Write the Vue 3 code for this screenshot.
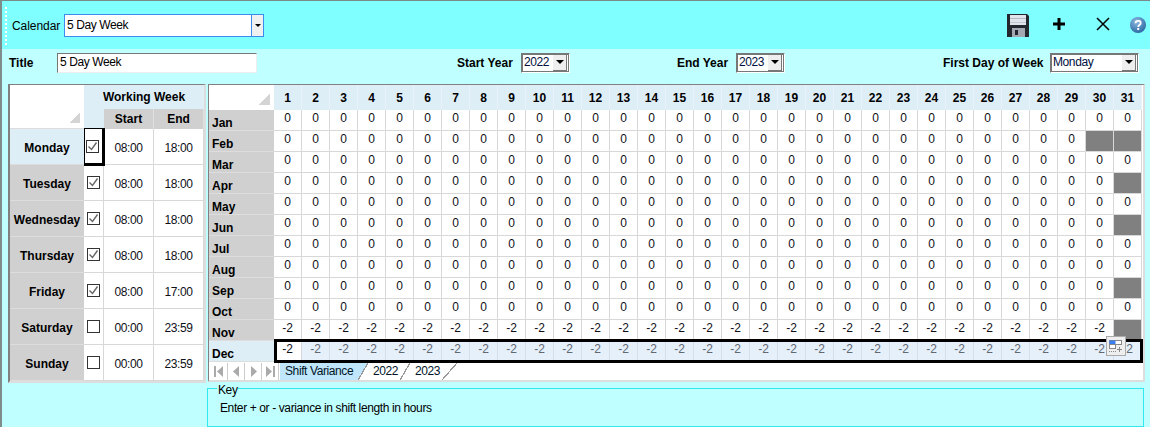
<template>
  <div class="window">
    <div class="toolbar">
      <div class="grip"></div>
      <span class="cal-label">Calendar</span>
      <div class="combo">
        <span class="combo-text">5 Day Week</span>
        <span class="combo-btn"><i class="arrow small"></i></span>
      </div>
      <div class="tools">
        <svg class="ico-save" width="22" height="23" viewBox="0 0 22 23">
          <path d="M0 0h20l2 2v21H0z" fill="#24282e" />
          <rect x="3" y="1" width="16" height="10" fill="#e2e4ec" />
          <rect x="3" y="4" width="16" height="1" fill="#b4b8c6" />
          <rect x="3" y="8" width="16" height="1" fill="#c4c8d2" />
          <rect x="5" y="14" width="13" height="9" fill="#a4a8b2" />
          <rect x="8" y="16" width="3" height="5" fill="#24282e" />
        </svg>
        <svg class="ico-plus" width="12" height="12" viewBox="0 0 12 12">
          <path d="M4.500 0h3v4.500h4.500v3h-4.500v4.500h-3v-4.500h-4.500v-3h4.500z" fill="#000" />
        </svg>
        <svg class="ico-close" width="14" height="14" viewBox="0 0 14 14">
          <path d="M1 1l12 12M13 1L1 13" stroke="#000" stroke-width="1.500" fill="none" />
        </svg>
        <svg class="ico-help" width="16" height="16" viewBox="0 0 16 16">
          <defs>
            <radialGradient id="helpfill" cx="0.4" cy="0.3" r="0.8">
              <stop offset="0" stop-color="#8db8e0" />
              <stop offset="1" stop-color="#20609c" />
            </radialGradient>
          </defs>
          <circle cx="8" cy="8" r="8" fill="url(#helpfill)" />
          <path d="M5.500 6.200c0-3.200 5.200-3.200 5.200-.2 0 2-2.500 2-2.500 4" stroke="#fff" stroke-width="1.800" fill="none" />
          <rect x="7.200" y="11" width="2" height="2" fill="#fff" />
        </svg>
      </div>
    </div>

    <div class="titlebar">
      <label class="t-label title-label">Title</label>
      <div class="title-input">5 Day Week</div>
      <label class="t-label start-label">Start Year</label>
      <div class="sel year-sel"><span>2022</span><span class="sel-btn"><i class="arrow"></i></span></div>
      <label class="t-label end-label">End Year</label>
      <div class="sel year-sel"><span>2023</span><span class="sel-btn"><i class="arrow"></i></span></div>
      <label class="t-label first-label">First Day of Week</label>
      <div class="sel day-sel"><span>Monday</span><span class="sel-btn"><i class="arrow"></i></span></div>
    </div>

    <div class="main">
      <div class="week-frame">
        <div class="week-grid">
          <div class="corner week-corner"><i class="tri"></i></div>
          <div class="ww-head">Working Week</div>
          <div class="blue-cell"></div>
          <div class="gray-head">Start</div>
          <div class="gray-head">End</div>
          <template v-for="(d, i) in days" :key="d.name">
            <div class="day-name" :class="{ active: i === 0 }">{{ d.name }}</div>
            <div class="check-cell" :class="{ focus: i === 0 }">
              <span class="check">
                <svg v-if="d.on" width="11" height="11" viewBox="0 0 11 11">
                  <path d="M1.500 5.500l3 3 5-7" stroke="#666" stroke-width="1.400" fill="none" />
                </svg>
              </span>
            </div>
            <div class="time">{{ d.start }}</div>
            <div class="time">{{ d.end }}</div>
          </template>
        </div>
      </div>

      <div class="sheet-frame">
        <div class="sheet-grid">
          <div class="corner sheet-corner"><i class="tri"></i></div>
          <div v-for="n in 31" :key="n" class="col-head">{{ n }}</div>
          <template v-for="(m, r) in months" :key="m">
            <div class="month" :class="{ active: r === 11 }">{{ m }}</div>
            <div
              v-for="n in 31"
              :key="n"
              class="val"
              :class="{ off: isOff(r, n), picked: r === 11 && n > 1, anchor: r === 11 && n === 1 }"
            >{{ isOff(r, n) ? '' : (r >= 10 ? '-2' : '0') }}</div>
          </template>
          <div class="dec-box"></div>
          <div class="paste-tag">
            <svg width="18" height="18" viewBox="0 0 18 18">
              <rect x="2.500" y="3.500" width="12" height="4" fill="#fff" stroke="#888" />
              <rect x="2.500" y="3.500" width="6" height="4" fill="#3a7ff0" />
              <rect x="2.500" y="7.500" width="6" height="4" fill="#fff" stroke="#888" />
              <path d="M2 14.500h7" stroke="#888" stroke-dasharray="1 1" />
              <path d="M10 12.500h5M12.500 10v5" stroke="#888" />
            </svg>
          </div>
        </div>
        <div class="tabs-row">
          <div class="nav-btns">
            <span class="nav"><svg width="9" height="11" viewBox="0 0 9 11"><path d="M0 0h2v11H0zM9 0v11L3 5.500z" fill="#aaa" /></svg></span>
            <span class="nav"><svg width="7" height="11" viewBox="0 0 7 11"><path d="M6 0v11L0 5.500z" fill="#aaa" /></svg></span>
            <span class="nav"><svg width="7" height="11" viewBox="0 0 7 11"><path d="M1 0v11l6-5.500z" fill="#aaa" /></svg></span>
            <span class="nav"><svg width="9" height="11" viewBox="0 0 9 11"><path d="M7 0h2v11H7zM0 0v11l6-5.500z" fill="#aaa" /></svg></span>
          </div>
          <div class="tab first">Shift Variance</div>
          <div class="tab y22">2022</div>
          <div class="tab y23">2023</div>
        </div>
      </div>
    </div>

    <fieldset class="key">
      <legend>Key</legend>
      <div class="key-text">Enter + or - variance in shift length in hours</div>
    </fieldset>
  </div>
</template>

<script setup>
const days = [
  { name: 'Monday', on: true, start: '08:00', end: '18:00' },
  { name: 'Tuesday', on: true, start: '08:00', end: '18:00' },
  { name: 'Wednesday', on: true, start: '08:00', end: '18:00' },
  { name: 'Thursday', on: true, start: '08:00', end: '18:00' },
  { name: 'Friday', on: true, start: '08:00', end: '17:00' },
  { name: 'Saturday', on: false, start: '00:00', end: '23:59' },
  { name: 'Sunday', on: false, start: '00:00', end: '23:59' }
]

const months = ['Jan', 'Feb', 'Mar', 'Apr', 'May', 'Jun', 'Jul', 'Aug', 'Sep', 'Oct', 'Nov', 'Dec']

// cells past the end of a short month are greyed out
const shortMonths = { 1: 30, 3: 31, 5: 31, 8: 31, 10: 31 }

function isOff(row, day) {
  return shortMonths[row] !== undefined && day >= shortMonths[row]
}
</script>

<style>
html, body {
  margin: 0;
  background: #bfffff;
}
</style>

<style scoped>
.window {
  box-sizing: border-box;
  width: 1150px;
  height: 427px;
  overflow: hidden;
  background: #bfffff;
  border-top: 1px solid #7a8a8a;
  border-left: 2px solid #7f8c8c;
  font-family: "Liberation Sans", Arial, sans-serif;
  font-size: 12px;
  color: #000;
}

/* ── toolbar ── */
.toolbar {
  height: 48px;
  background: #7fffff;
  display: flex;
  align-items: center;
  box-sizing: border-box;
}
.grip {
  width: 2px;
  height: 38px;
  margin-left: 3px;
  margin-top: 1px;
  background: repeating-linear-gradient(180deg, #fff 0 2px, transparent 2px 4px);
}
.cal-label {
  margin-left: 5px;
  width: 52px;
  font-size: 12px;
  letter-spacing: -0.05px;
  margin-top: 1px;
}
.combo {
  width: 200px;
  height: 23px;
  box-sizing: border-box;
  border: 1px solid #3c8cf0;
  background: #fff;
  display: flex;
}
.combo-text {
  flex: 1;
  padding-left: 2px;
  line-height: 21px;
  letter-spacing: -0.4px;
}
.combo-btn {
  width: 11px;
  border-left: 1px solid #3c8cf0;
  background: #f0f0f0;
  display: flex;
  align-items: center;
  justify-content: center;
}
.tools {
  margin-left: auto;
  display: flex;
  align-items: center;
  margin-right: 4px;
  padding-bottom: 2px;
}
.ico-save { margin-right: 24px; margin-top: 2px; }
.ico-plus { margin-right: 31px; }
.ico-close { margin-right: 20px; }
.ico-help { margin-top: 2px; }

.arrow {
  display: block;
  width: 0;
  height: 0;
  border-left: 4px solid transparent;
  border-right: 4px solid transparent;
  border-top: 4px solid #000;
}
.arrow.small {
  border-left-width: 3px;
  border-right-width: 3px;
  border-top-width: 3px;
}

/* ── title row ── */
.titlebar {
  height: 35px;
  display: flex;
  align-items: center;
  box-sizing: border-box;
  padding-bottom: 8px;
}
.t-label {
  font-weight: bold;
  font-size: 12px;
}
.title-label { margin-left: 7px; width: 48px; }
.title-input {
  width: 200px;
  height: 20px;
  box-sizing: border-box;
  background: #fff;
  border: 1px solid #eee;
  border-top-color: #777;
  border-left-color: #777;
  padding-left: 2px;
  line-height: 17px;
  letter-spacing: -0.4px;
}
.start-label { margin-left: 200px; width: 64px; }
.end-label { margin-left: 107px; width: 59px; }
.first-label { margin-left: 158px; width: 107px; }
.sel {
  height: 20px;
  box-sizing: border-box;
  background: #fff;
  border: 1px solid #fff;
  border-top-color: #777;
  border-left-color: #777;
  outline: 1px solid #777;
  outline-offset: -2px;
  display: flex;
  justify-content: space-between;
  padding: 1px 2px 1px 2px;
  font-size: 12px;
  letter-spacing: -0.4px;
  line-height: 15px;
  color: #001040;
}
.year-sel { width: 49px; }
.day-sel { width: 89px; }
.sel-btn {
  width: 14px;
  background: #eee;
  border-right: 1px solid #777;
  border-bottom: 1px solid #777;
  box-sizing: border-box;
  display: flex;
  align-items: center;
  justify-content: center;
}

/* ── grids ── */
.main {
  display: flex;
  align-items: flex-start;
  margin-left: 6px;
  gap: 2px;
  height: 298px;
}
.week-frame,
.sheet-frame {
  box-sizing: border-box;
  background: #fff;
  border-top: 1px solid #808080;
  border-left: 1px solid #808080;
  border-right: 2px solid #ddd;
  border-bottom: 2px solid #ddd;
}
.week-frame { width: 198px; height: 299px; border-left-width: 2px; }
.sheet-frame { width: 937px; height: 298px; }

.week-grid {
  display: grid;
  grid-template-columns: 74px 20px 50px 50px;
  grid-template-rows: 24px 20px repeat(7, 36px);
  position: relative;
  font-size: 12px;
}
.corner {
  position: relative;
  background: #fff;
  border-bottom: 1px solid #ddd;
  box-sizing: border-box;
}
.week-corner { grid-row: 1 / 3; }
.tri {
  position: absolute;
  right: 4px;
  bottom: 5px;
  width: 11px;
  height: 11px;
  background: linear-gradient(135deg, transparent 50%, #d4d4d4 50%);
}
.ww-head {
  grid-column: 2 / 5;
  background: #deeef7;
  font-weight: bold;
  text-align: center;
  line-height: 24px;
}
.blue-cell { background: #deeef7; }
.gray-head {
  background: #d0d0d0;
  font-weight: bold;
  text-align: center;
  line-height: 20px;
  border-right: 1px solid #e0e0e0;
  box-sizing: border-box;
}
.day-name {
  background: #d0d0d0;
  font-weight: bold;
  display: flex;
  align-items: center;
  justify-content: center;
  border-bottom: 1px solid #ddd;
  box-sizing: border-box;
  padding-top: 2px;
}
.day-name.active { background: #deeef7; }
.check-cell {
  position: relative;
  display: flex;
  align-items: center;
  justify-content: center;
  border-bottom: 1px solid #d8d8d8;
  border-right: 1px solid #d8d8d8;
  box-sizing: border-box;
  padding-right: 1px;
}
.check-cell.focus {
  border-top: 1px solid #000;
  border-left: 1px solid #000;
  border-right: 3px solid #000;
  border-bottom: 3px solid #000;
  width: 21px;
  height: 38px;
  margin-top: -1px;
  z-index: 1;
  padding-right: 2px;
}
.check {
  width: 13px;
  height: 13px;
  box-sizing: border-box;
  border: 1px solid #333;
  background: #fff;
  display: flex;
  align-items: center;
  justify-content: center;
}
.time {
  display: flex;
  align-items: center;
  justify-content: center;
  font-size: 12px;
  letter-spacing: -0.4px;
  color: #101018;
  border-bottom: 1px solid #d8d8d8;
  border-right: 1px solid #d8d8d8;
  box-sizing: border-box;
  padding-top: 2px;
}

.sheet-grid {
  display: grid;
  grid-template-columns: 65px repeat(31, 28px);
  grid-template-rows: 25px repeat(12, 21px);
  position: relative;
  height: 277px;
}
.sheet-corner { border-bottom: none; }
.col-head {
  background: #deeef7;
  font-weight: bold;
  font-size: 12px;
  text-align: center;
  line-height: 27px;
  border-right: 1px solid #e8f2f8;
  box-sizing: border-box;
}
.month {
  background: #d0d0d0;
  font-weight: bold;
  font-size: 12px;
  padding: 6px 0 0 3px;
  box-sizing: border-box;
  border-bottom: 1px solid #ddd;
  line-height: 14px;
}
.month.active { background: #deeef7; }
.val {
  text-align: center;
  font-size: 12px;
  line-height: 16px;
  border-right: 1px solid #d8d8d8;
  border-bottom: 1px solid #d8d8d8;
  box-sizing: border-box;
  color: #101018;
}
.val.off { background: #808080; }
.val.picked {
  background: #e6f0fb;
  color: #606870;
  border-right-color: #d4dfea;
  border-bottom: none;
}
.val.anchor { border-bottom: none; }
.dec-box {
  position: absolute;
  left: 65px;
  top: 254px;
  width: 869px;
  height: 24px;
  box-sizing: border-box;
  border: 3px solid #000;
  pointer-events: none;
}
.paste-tag {
  position: absolute;
  left: 897px;
  top: 251px;
  width: 20px;
  height: 20px;
  box-sizing: border-box;
  border: 1px solid #aaa;
  background: #eee;
  display: flex;
  align-items: center;
  justify-content: center;
}

/* ── sheet tabs ── */
.tabs-row {
  display: flex;
  height: 17px;
  align-items: stretch;
  padding-left: 1px;
  margin-top: 1px;
}
.nav-btns {
  display: flex;
  border-right: 1px solid #ccc;
}
.nav {
  width: 17px;
  box-sizing: border-box;
  border-left: 1px solid #ccc;
  display: flex;
  align-items: center;
  justify-content: center;
}
.nav:first-child { border-left: none; }
.tab {
  position: relative;
  font-size: 12px;
  letter-spacing: -0.4px;
  line-height: 16px;
  color: #001428;
  box-sizing: border-box;
}
.tab.first {
  width: 87px;
  margin-left: 1px;
  padding-left: 5px;
  background: #bfe6fa;
  clip-path: polygon(0 0, 100% 0, calc(100% - 9px) 100%, 0 100%);
}
.y22 { width: 43px; padding-left: 6px; }
.y23 { width: 47px; padding-left: 5px; }
/* slanted tab edges */
.y22::before,
.y22::after,
.y23::after {
  content: "";
  position: absolute;
  top: 0;
  height: 100%;
  background: linear-gradient(to top left, transparent calc(50% - 0.6px), #999 calc(50% - 0.6px), #999 calc(50% + 0.6px), transparent calc(50% + 0.6px));
}
.y22::before { left: -9px; width: 10px; }
.y22::after { right: 0; width: 10px; }
.y23::after { right: 0; width: 15px; }

/* ── key ── */
.key {
  width: 937px;
  height: 45px;
  margin: 0 0 0 205px;
  padding: 0 0 0 12px;
  box-sizing: border-box;
  border: 1px solid #30e8f0;
  min-width: 0;
}
.key legend {
  padding: 0 1px;
  margin-left: -3px;
  height: 12px;
  line-height: 16px;
  font-size: 12px;
  letter-spacing: -0.4px;
}
.key-text {
  font-size: 12px;
  letter-spacing: -0.38px;
  margin-top: 7px;
}
</style>
